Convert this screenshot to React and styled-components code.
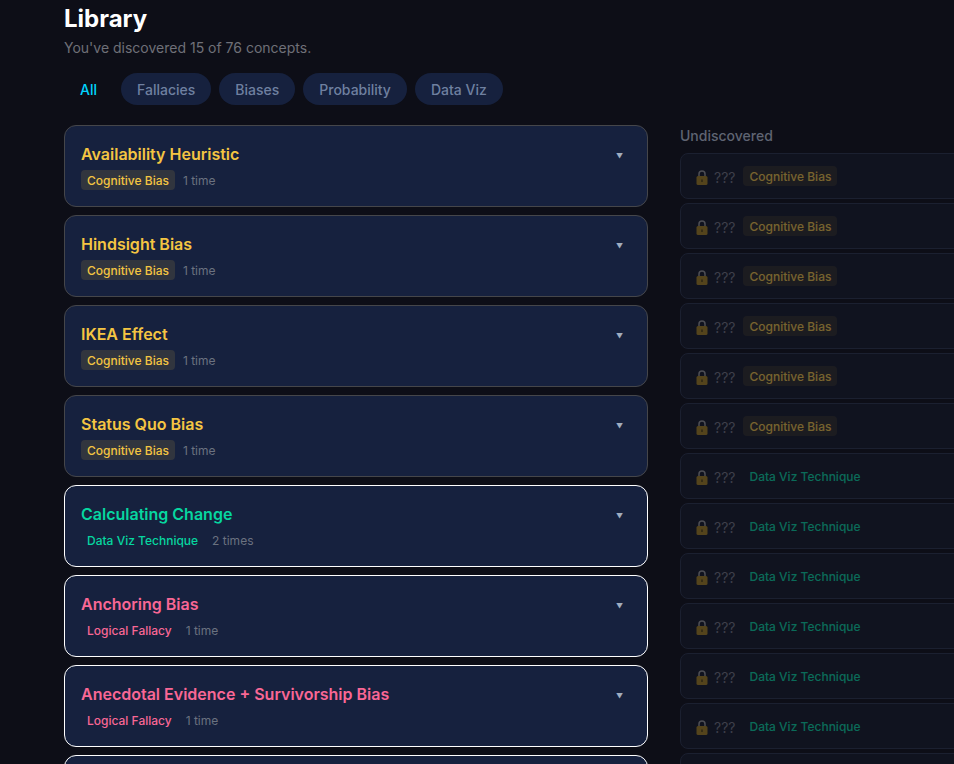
import styled, { createGlobalStyle } from "styled-components";

const GlobalStyle = createGlobalStyle`
  html, body {
    margin: 0;
    height: 764px;
    overflow: hidden;
    background-color: #0d0e17;
  }
  * {
    box-sizing: border-box;
  }
`;

const colors = {
  bias: { text: "#f4c542", tag: "rgba(244, 197, 66, 0.12)", border: "#45464a" },
  viz: { text: "#06d6a0", tag: "transparent", border: "#ffffff" },
  fallacy: { text: "#f96795", tag: "transparent", border: "#ffffff" },
};

const Page = styled.div`
  width: 1000px;
  height: 764px;
  overflow: hidden;
  padding: 4px 0 0 64px;
  font-family: Inter, "Liberation Sans", sans-serif;
`;

const Title = styled.h1`
  margin: 0;
  font-size: 24px;
  line-height: 29px;
  font-weight: 700;
  color: #ffffff;
`;

const Subtitle = styled.p`
  margin: 6px 0 0;
  font-size: 14px;
  line-height: 17px;
  color: #6f7078;
`;

const Filters = styled.div`
  display: flex;
  gap: 8px;
  margin-top: 17px;
`;

const Filter = styled.button`
  height: 32px;
  padding: 0 16px;
  border: none;
  border-radius: 16px;
  font-family: inherit;
  font-size: 14px;
  font-weight: 500;
  color: ${(props) => (props.$active ? "#00d4ff" : "#6f80a0")};
  background-color: ${(props) => (props.$active ? "transparent" : "#16213e")};
`;

const Columns = styled.div`
  display: flex;
  gap: 32px;
  margin-top: 20px;
`;

const Discovered = styled.div`
  flex: 0 0 584px;
  display: flex;
  flex-direction: column;
  gap: 8px;
`;

const Card = styled.div`
  flex: 0 0 82px;
  display: flex;
  justify-content: space-between;
  padding: 16px 24px 0 16px;
  border: 1px solid ${(props) => colors[props.$kind].border};
  border-radius: 12px;
  background-color: #16213e;
`;

const CardName = styled.div`
  font-size: 16px;
  line-height: 24px;
  font-weight: 600;
  color: ${(props) => colors[props.$kind].text};
`;

const CardMeta = styled.div`
  display: flex;
  align-items: center;
  gap: 8px;
  margin-top: 4px;
`;

const Tag = styled.span`
  padding: 3px 6px 1px;
  border-radius: 4px;
  font-size: 12px;
  line-height: 16px;
  font-weight: 500;
  color: ${(props) => colors[props.$kind].text};
  background-color: ${(props) => colors[props.$kind].tag};
`;

const Count = styled.span`
  padding-top: 2px;
  font-size: 12px;
  line-height: 16px;
  color: #6b7280;
`;

const Arrow = styled.span`
  margin-top: 7px;
  font-size: 7px;
  line-height: 16px;
  color: #a0aec0;
`;

const Undiscovered = styled.div`
  flex: 0 0 320px;
  display: flex;
  flex-direction: column;
  gap: 4px;
`;

const SideTitle = styled.h2`
  margin: 2px 0 5px;
  font-size: 14px;
  line-height: 17px;
  font-weight: 500;
  color: #5f6472;
`;

const LockedRow = styled.div`
  flex: 0 0 46px;
  display: flex;
  align-items: center;
  gap: 6px;
  padding-left: 15px;
  border: 1px solid #1b2030;
  border-radius: 8px;
  background-color: #10131f;
`;

const Mystery = styled.span`
  margin: 2px 2px 0 0;
  font-size: 14px;
  color: #3d3f4a;
`;

const LockedTag = styled(Tag)`
  opacity: 0.45;
`;

const LockSvg = styled.svg`
  margin-top: 3px;
`;

function LockIcon() {
  return (
    <LockSvg width="12" height="15" viewBox="0 0 12 15">
      <path d="M3 6.5V4a3 3 0 0 1 6 0v2.5" fill="none" stroke="#4e4f55" strokeWidth="1.5" />
      <rect x="0.5" y="6" width="11" height="9" rx="1.5" fill="#54441c" />
      <rect x="5.3" y="9.5" width="1.4" height="2.5" fill="#2a2414" />
    </LockSvg>
  );
}

const cards = [
  { name: "Availability Heuristic", kind: "bias", tag: "Cognitive Bias", count: "1 time" },
  { name: "Hindsight Bias", kind: "bias", tag: "Cognitive Bias", count: "1 time" },
  { name: "IKEA Effect", kind: "bias", tag: "Cognitive Bias", count: "1 time" },
  { name: "Status Quo Bias", kind: "bias", tag: "Cognitive Bias", count: "1 time" },
  { name: "Calculating Change", kind: "viz", tag: "Data Viz Technique", count: "2 times" },
  { name: "Anchoring Bias", kind: "fallacy", tag: "Logical Fallacy", count: "1 time" },
  { name: "Anecdotal Evidence + Survivorship Bias", kind: "fallacy", tag: "Logical Fallacy", count: "1 time" },
  { name: "", kind: "fallacy", tag: "", count: "" },
];

// the 13th row only shows its top edge in the window
const locked = [
  ...Array(6).fill({ kind: "bias", tag: "Cognitive Bias" }),
  ...Array(6).fill({ kind: "viz", tag: "Data Viz Technique" }),
  { kind: "viz", tag: "" },
];

function App() {
  return (
    <Page>
      <GlobalStyle />
      <Title>Library</Title>
      <Subtitle>You've discovered 15 of 76 concepts.</Subtitle>
      <Filters>
        <Filter $active>All</Filter>
        <Filter>Fallacies</Filter>
        <Filter>Biases</Filter>
        <Filter>Probability</Filter>
        <Filter>Data Viz</Filter>
      </Filters>
      <Columns>
        <Discovered>
          {cards.map((card, i) => (
            <Card key={i} $kind={card.kind}>
              <div>
                <CardName $kind={card.kind}>{card.name}</CardName>
                <CardMeta>
                  <Tag $kind={card.kind}>{card.tag}</Tag>
                  <Count>{card.count}</Count>
                </CardMeta>
              </div>
              {card.name && <Arrow>▼</Arrow>}
            </Card>
          ))}
        </Discovered>
        <Undiscovered>
          <SideTitle>Undiscovered</SideTitle>
          {locked.map((row, i) => (
            <LockedRow key={i}>
              {row.tag && (
                <>
                  <LockIcon />
                  <Mystery>???</Mystery>
                  <LockedTag $kind={row.kind}>{row.tag}</LockedTag>
                </>
              )}
            </LockedRow>
          ))}
        </Undiscovered>
      </Columns>
    </Page>
  );
}

export default App;
